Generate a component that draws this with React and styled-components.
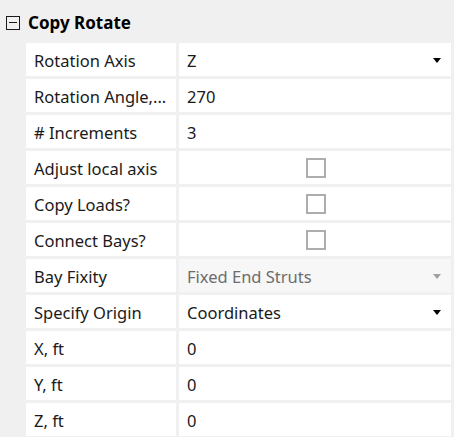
import React from 'react';
import styled, { createGlobalStyle } from 'styled-components';

const GlobalStyle = createGlobalStyle`
  html, body {
    margin: 0;
    padding: 0;
    background: #f0f0f0;
  }
  body {
    font-family: "Noto Sans", "Open Sans", sans-serif;
  }
`;

const rows = [
  { label: 'Rotation Axis', kind: 'select', value: 'Z' },
  { label: 'Rotation Angle,...', kind: 'text', value: '270' },
  { label: '# Increments', kind: 'text', value: '3' },
  { label: 'Adjust local axis', kind: 'check' },
  { label: 'Copy Loads?', kind: 'check' },
  { label: 'Connect Bays?', kind: 'check' },
  { label: 'Bay Fixity', kind: 'select', value: 'Fixed End Struts', disabled: true },
  { label: 'Specify Origin', kind: 'select', value: 'Coordinates' },
  { label: 'X, ft', kind: 'text', value: '0' },
  { label: 'Y, ft', kind: 'text', value: '0' },
  { label: 'Z, ft', kind: 'text', value: '0' },
];

const App = () => {
  return (
    <Panel>
      <GlobalStyle />
      <Header>
        <Collapse />
        <Title>Copy Rotate</Title>
      </Header>
      <Grid>
        {rows.map((r) => (
          <React.Fragment key={r.label}>
            <LabelCell>{r.label}</LabelCell>
            {r.kind === 'check' ? (
              <ValueCell $center>
                <CheckBox />
              </ValueCell>
            ) : (
              <ValueCell $disabled={r.disabled}>
                <ValueText>{r.value}</ValueText>
                {r.kind === 'select' && <Arrow $disabled={r.disabled} />}
              </ValueCell>
            )}
          </React.Fragment>
        ))}
      </Grid>
    </Panel>
  );
};

export default App;

const Panel = styled.div`
  width: 454px;
  height: 437px;
  background: #f0f0f0;
  overflow: hidden;
`;

const Header = styled.div`
  height: 43px;
  display: flex;
  align-items: center;
  padding-left: 6px;
  padding-top: 2px;
  gap: 8px;
  box-sizing: border-box;
`;

const Collapse = styled.div`
  width: 14px;
  height: 14px;
  box-sizing: border-box;
  border: 1.5px solid #1a1a1a;
  position: relative;
  &::after {
    content: '';
    position: absolute;
    left: 2px;
    right: 2px;
    top: 5px;
    height: 1.5px;
    background: #1a1a1a;
  }
`;

const Title = styled.span`
  font-weight: bold;
  font-size: 17px;
  color: #000;
`;

const Grid = styled.div`
  display: grid;
  grid-template-columns: 150px 272px;
  grid-auto-rows: 33px;
  column-gap: 3px;
  row-gap: 3px;
  padding-left: 26px;
`;

const LabelCell = styled.div`
  background: #fff;
  display: flex;
  align-items: center;
  padding-left: 8px;
  padding-top: 1px;
  font-size: 16.5px;
  color: #1a1a1a;
  white-space: nowrap;
  overflow: hidden;
`;

const ValueCell = styled.div`
  background: ${(p) => (p.$disabled ? '#f7f7f7' : '#fff')};
  color: ${(p) => (p.$disabled ? '#6d6d6d' : '#1a1a1a')};
  display: flex;
  align-items: center;
  justify-content: ${(p) => (p.$center ? 'center' : 'space-between')};
  padding: ${(p) => (p.$center ? '0' : '1px 10px 0 8px')};
  font-size: 16.5px;
`;

const ValueText = styled.span`
  white-space: nowrap;
`;

const Arrow = styled.div`
  width: 0;
  height: 0;
  border-left: 4px solid transparent;
  border-right: 4px solid transparent;
  border-top: 5px solid ${(p) => (p.$disabled ? '#a0a0a0' : '#000')};
`;

const CheckBox = styled.div`
  width: 20px;
  height: 20px;
  box-sizing: border-box;
  border: 2px solid #adadb0;
  background: #fff;
  margin-left: 2px;
`;
